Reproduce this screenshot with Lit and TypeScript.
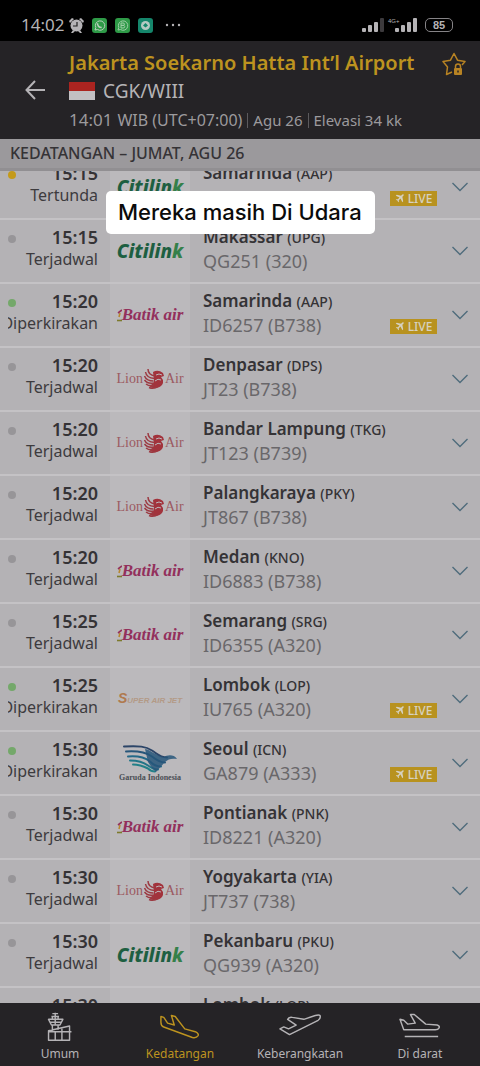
import { LitElement, html, css, svg, nothing } from "lit";
import { customElement, property, query } from "lit/decorators.js";
import { classMap } from "lit/directives/class-map.js";

type Airline = "citilink" | "batik" | "lion" | "super" | "garuda";
type Status = "Tertunda" | "Terjadwal" | "Diperkirakan";

interface Flight {
  time: string;
  status: Status;
  airline: Airline;
  city: string;
  code: string;
  flight: string;
  live?: boolean;
}

const FLIGHTS: Flight[] = [
  { time: "15:15", status: "Tertunda", airline: "citilink", city: "Samarinda", code: "AAP", flight: "QG425 (A320)", live: true },
  { time: "15:15", status: "Terjadwal", airline: "citilink", city: "Makassar", code: "UPG", flight: "QG251 (320)" },
  { time: "15:20", status: "Diperkirakan", airline: "batik", city: "Samarinda", code: "AAP", flight: "ID6257 (B738)", live: true },
  { time: "15:20", status: "Terjadwal", airline: "lion", city: "Denpasar", code: "DPS", flight: "JT23 (B738)" },
  { time: "15:20", status: "Terjadwal", airline: "lion", city: "Bandar Lampung", code: "TKG", flight: "JT123 (B739)" },
  { time: "15:20", status: "Terjadwal", airline: "lion", city: "Palangkaraya", code: "PKY", flight: "JT867 (B738)" },
  { time: "15:20", status: "Terjadwal", airline: "batik", city: "Medan", code: "KNO", flight: "ID6883 (B738)" },
  { time: "15:25", status: "Terjadwal", airline: "batik", city: "Semarang", code: "SRG", flight: "ID6355 (A320)" },
  { time: "15:25", status: "Diperkirakan", airline: "super", city: "Lombok", code: "LOP", flight: "IU765 (A320)", live: true },
  { time: "15:30", status: "Diperkirakan", airline: "garuda", city: "Seoul", code: "ICN", flight: "GA879 (A333)", live: true },
  { time: "15:30", status: "Terjadwal", airline: "batik", city: "Pontianak", code: "PNK", flight: "ID8221 (A320)" },
  { time: "15:30", status: "Terjadwal", airline: "lion", city: "Yogyakarta", code: "YIA", flight: "JT737 (738)" },
  { time: "15:30", status: "Terjadwal", airline: "citilink", city: "Pekanbaru", code: "PKU", flight: "QG939 (A320)" },
  { time: "15:30", status: "Terjadwal", airline: "lion", city: "Lombok", code: "LOP", flight: "JT657 (B738)" },
];

@customElement("airline-logo")
class AirlineLogo extends LitElement {
  @property() airline: Airline = "citilink";

  static styles = css`
    :host { display: block; }
    .logo { display: flex; align-items: center; justify-content: center; white-space: nowrap; line-height: 20px; }
    .citilink { font: italic 800 19px/20px "Noto Sans", sans-serif; color: #1d5f41; }
    .citilink b { color: #35804a; font-weight: 800; }
    .batik { font: italic 700 17px/20px "Liberation Serif", serif; color: #93305c; gap: 4px; }
    .batik .name { display: flex; align-items: center; }
    .lion { font: 14px/20px "Liberation Serif", serif; color: #9c5a62; }
    .super { font: italic 700 8px/12px "Liberation Sans", sans-serif; color: #b39a86; align-items: baseline; }
    .super b { font-size: 14px; color: #b07a4e; }
    .garuda { flex-direction: column; font: 700 8px/9px "Liberation Serif", serif; color: #4a4e53; }
  `;

  render() {
    switch (this.airline) {
      case "citilink":
        return html`<div class="logo citilink"><span>Citilin<b>k</b></span></div>`;
      case "batik":
        return html`<div class="logo batik"><span class="name"><svg width="5" height="14" viewBox="0 0 5 14" fill="none" stroke-width="1.600"><path d="M5 2 1 5" stroke="#93305c" /><path d="M3 5 2 9" stroke="#b8862e" /><path d="M0 12.500h5" stroke="#7d7a2c" /></svg>Batik</span><span>air</span></div>`;
      case "lion":
        return html`<div class="logo lion"><span>Lion</span>
          <svg width="22" height="22" viewBox="0 0 22 22" fill="none" stroke="#9c3a42" stroke-width="1.500">
            <path d="M10 4q5-3 10 1l1 3-3 1 2 3q1 6-6 8-6 1-8-3 5 0 5-5z" fill="#a2333c" stroke="none" />
            <path d="M5 1q0 6 7 7M2.500 4q1 6 9 6.500M1.500 8q2 5 9 5M1.500 12q3 4 9 3M3 16q4 3 8 1M6 19.500q5 2 8-1" />
            <path d="M13 7q3-2 6 0M12 13q3-3 6-1" stroke="#bbb9bc" stroke-width="1" />
          </svg><span>Air</span></div>`;
      case "super":
        return html`<div class="logo super"><b>S</b><span>UPER AIR JET</span></div>`;
      case "garuda":
        return html`<div class="logo garuda">
          <svg width="54" height="28" viewBox="0 0 54 28">
            <g fill="none" stroke-linecap="round" stroke-width="2">
              <path d="M1 1.500c15-1 22 0 28 4 6 4 8 7 15 7" stroke="#2c4568" />
              <path d="M3 6.500c13-1 20 1 26 5 5 4 8 6 13 6" stroke="#27567a" />
              <path d="M5 11.500c11-1 17 1 22 5 4 4 7 5 11 5" stroke="#236988" />
              <path d="M7 15.500c10 0 14 2 18 5 4 3 6 4 10 4" stroke="#217588" />
              <path d="M10 19.500c7 0 11 2 15 4 2 2 4 3 7 3" stroke="#238088" />
            </g>
            <path fill="#27567a" d="M22 4c6 1 11 7 19 8 3-2 10-3 13 2-5-1-9 0-12 3l-9 10-4-4-4-6z" opacity=".85" />
          </svg><span>Garuda Indonesia</span></div>`;
    }
  }
}

@customElement("flight-row")
class FlightRow extends LitElement {
  @property({ attribute: false }) flight!: Flight;

  static styles = css`
    :host { display: block; }
    .row {
      display: grid; grid-template-columns: 110px 80px 1fr auto 43px;
      height: 64px; box-sizing: border-box; border-bottom: 2px solid #c4c2c5; background: #b4b2b5;
    }
    .when { display: grid; grid-template-columns: 8px 1fr; padding: 6px 12px 0 8px; align-content: start; }
    .dot { width: 8px; height: 8px; border-radius: 50%; background: #979598; margin-top: 9px; }
    .dot.ontime { background: #74a86a; }
    .dot.late { background: #c49a1a; }
    .time { text-align: right; font: 600 18px/22px "Noto Sans", sans-serif; color: #353336; }
    .status {
      grid-column: 1 / -1; display: flex; justify-content: flex-end; overflow: hidden;
      font-size: 16px; line-height: 22px; color: #3d3b3e;
    }
    .logo { background: #bbb9bc; display: grid; align-content: center; }
    .where { padding: 6px 0 0 13px; white-space: nowrap; }
    .city { font-weight: 600; font-size: 17px; line-height: 22px; color: #353336; }
    .code { font-size: 14px; font-weight: 500; }
    .number { font-size: 18px; line-height: 24px; color: #69676a; }
    .live {
      align-self: end; margin-bottom: 12px; display: flex; align-items: center; justify-content: center; gap: 4px;
      width: 47px; height: 15px; background: #b8921f; color: #d6d1c0;
      font: 500 12px/15px "Noto Sans", sans-serif;
    }
    .more { border: 0; background: none; padding: 0 0 0 3px; display: grid; place-content: center; }
  `;

  render() {
    const f = this.flight;
    return html`<div class="row">
      <div class="when">
        <span class=${classMap({ dot: true, ontime: f.status === "Diperkirakan", late: f.status === "Tertunda" })}></span>
        <span class="time">${f.time}</span>
        <span class="status"><span>${f.status}</span></span>
      </div>
      <div class="logo"><airline-logo .airline=${f.airline}></airline-logo></div>
      <div class="where">
        <div class="city">${f.city} <span class="code">(${f.code})</span></div>
        <div class="number">${f.flight}</div>
      </div>
      ${f.live
        ? html`<span class="live"><svg width="9" height="9" viewBox="0 0 11 11" fill="#d6d1c0">
            <path d="M10.500.5C9.600 0 8.500 1 7.500 2L2 1 1 2l4.500 2.300L3.500 6.500 1.500 6.300 1 7l2 1 1 2 .8-.6L4.600 7.500l2.100-2L9 10l1-1L9 3.500c1-1 2-2 1.500-3z" />
          </svg>LIVE</span>`
        : html`<span></span>`}
      <button class="more" aria-label="Detail ${f.flight}">
        <svg width="18" height="10" viewBox="0 0 18 10" fill="none" stroke="#4f6c7c" stroke-width="1.400"><path d="M1.500 1 9 8.500 16.500 1" /></svg>
      </button>
    </div>`;
  }
}

const NAV = [
  {
    label: "Umum",
    icon: svg`<path d="M17 5V1m-3 1h6M13 5h8M10 8h15l-3 6h-9zM17 5v9M14 5v3M20 5v3M11 11h13M14 14v7M20 14v5M10 20l22-5v15H10zM10 21h24M17 21v9M24 18v12" />`,
  },
  {
    label: "Kedatangan",
    current: true,
    icon: svg`<path d="M2 5l3 1 4 6 7 2-3-10 4 1 10 13 11 3q4 2 3 4-2 3-6 2L5 16Q2 15 2 11z" />`,
  },
  {
    label: "Keberangkatan",
    icon: svg`<path d="M1 18l4-2 5 2 8-4-9-6q2-3 5-2l12 2 12-4q4-1 5 0 1 3-2 5L11 24z" />`,
  },
  {
    label: "Di darat",
    icon: svg`<path d="M1 8l4 1 4 4 8-1-5-9 4 0 12 10 12 1q3 1 2 3-1 2-4 2H5zM6 26h35" />`,
  },
];

@customElement("app-root")
class AppRoot extends LitElement {
  @query(".list") list!: HTMLElement;

  static styles = css`
    :host {
      display: flex; flex-direction: column; height: 100vh; position: relative; overflow: hidden;
      background: #b4b2b5; font-family: "Noto Sans", sans-serif;
    }
    .system {
      display: flex; align-items: center; gap: 8px; height: 41px; padding: 9px 27px 0 21px; box-sizing: border-box;
      background: #000; color: #b5b3b6; flex: none;
    }
    .clock { font-size: 17px; line-height: 20px; }
    .tray { display: flex; align-items: center; gap: 8px; flex: 1; margin-left: -3px; }
    .more { margin-left: 2px; }
    .cell { display: flex; align-items: flex-end; }
    .battery {
      width: 28px; height: 14px; box-sizing: border-box; border: 1px solid #858386; border-radius: 5px;
      font: 700 11px/12px "Liberation Sans", sans-serif; text-align: center; margin-left: -3px;
    }
    .airport {
      display: grid; grid-template-columns: 69px 1fr 52px; height: 98px; padding-top: 10px; box-sizing: border-box;
      background: #252326; flex: none; color: #b5b3b6;
    }
    .icon { border: 0; padding: 0; background: none; display: grid; place-content: center; }
    .back { height: 78px; }
    .star { height: 26px; }
    h1 { margin: 0; font-size: 20px; line-height: 24px; font-weight: 600; color: #bd931f; white-space: nowrap; }
    .codes { display: flex; align-items: center; gap: 8px; font-size: 19px; line-height: 32px; }
    .flag { width: 26px; height: 18px; background: linear-gradient(#ab2420 50%, #c2c0c3 50%); }
    .facts { display: flex; align-items: center; font-size: 15px; line-height: 26px; color: #9c9a9d; white-space: nowrap; }
    .now { font-size: 17px; margin-right: 5px; }
    .zone { font-size: 16px; }
    .fact { border-left: 1px solid #5c5a5d; line-height: 15px; margin-left: 5px; padding-left: 5px; }
    h2 {
      margin: 0; padding: 0 10px; font-size: 16px; line-height: 29px; font-weight: 500; flex: none;
      background: #9b999c; color: #353336; border-bottom: 3px solid #918f92;
    }
    .list { flex: 1; min-height: 0; margin: 0; padding: 0; list-style: none; overflow-y: auto; scrollbar-width: none; }
    .caption {
      position: absolute; top: 191px; left: 106px; padding: 0 13px 0 12px; border-radius: 5px; background: #fff; color: #0b0b0b;
      font: 500 22px/43px "Inter", sans-serif; white-space: nowrap;
    }
    nav { display: grid; grid-template-columns: repeat(4, 1fr); height: 63px; background: #252326; flex: none; }
    .tab {
      display: flex; flex-direction: column; align-items: center; padding-top: 8px;
      color: #b5b3b6; text-decoration: none; font-size: 12px; line-height: 18px;
    }
    .tab svg { margin-bottom: 4px; overflow: visible; }
    .tab.current { color: #bd931f; }
  `;

  firstUpdated() {
    requestAnimationFrame(() => (this.list.scrollTop = 15));
  }

  render() {
    return html`
      <div class="system">
        <span class="clock">14:02</span>
        <span class="tray">
          <svg width="15" height="15" viewBox="0 0 15 15" fill="#b5b3b6"><circle cx="7.500" cy="7.500" r="6" /><path d="M0 3 3 0l2 1-4 4zM15 3l-3-3-2 1 4 4zM2 15l2-3 2 1-2 2zM13 15l-2-3-2 1 2 2z" /><path d="M8 4v4H4" fill="none" stroke="#222" stroke-width="1.200" /></svg>
          <svg width="15" height="15" viewBox="0 0 15 15" fill="none" stroke="#b9cdbc"><rect width="15" height="15" rx="3" fill="#2e9a47" stroke="none" /><path d="M3 12l.8-2.500A4.700 4.700 0 1 1 5.500 11.500z" /><path d="M5.500 5.200c0 2.500 1.800 4.200 4.200 4.300" stroke-width="1.500" /></svg>
          <svg width="15" height="15" viewBox="0 0 15 15" fill="none" stroke="#9fcfa8"><rect width="15" height="15" rx="3" fill="#2e9a47" stroke="none" /><path d="M3 12l.8-2.500A4.700 4.700 0 1 1 5.500 11.500z" /><path d="M6 10V5h2q1.500 0 1.500 1.200T8 7.400H6h2q1.800 0 1.800 1.300T8 10z" /></svg>
          <svg width="15" height="15" viewBox="0 0 15 15"><rect width="15" height="15" rx="3" fill="#15866b" /><circle cx="7.500" cy="7.500" r="4.500" fill="#b5c9c3" /><path d="M7.500 5 10 7.500l-2.500 2L5 7.500z" fill="#15866b" /></svg>
          <svg class="more" width="20" height="4" viewBox="0 0 20 4" fill="#b5b3b6"><circle cx="4" cy="2" r="1.200" /><circle cx="10" cy="2" r="1.200" /><circle cx="16" cy="2" r="1.200" /></svg>
        </span>
        <span class="cell">
          <svg width="58" height="16" viewBox="0 0 58 16" fill="#b5b3b6">
            <rect y="11" width="4" height="4" rx="1" /><rect x="6" y="8" width="4" height="7" rx="1" /><rect x="12" y="5" width="4" height="10" rx="1" /><rect x="18" y="1" width="4" height="14" rx="1" fill="#3c3a3d" />
            <text x="26" y="6" font-size="6" font-family="Liberation Sans, sans-serif">4G+</text>
            <rect x="33" y="11" width="4" height="4" rx="1" /><rect x="39" y="8" width="4" height="7" rx="1" /><rect x="45" y="5" width="4" height="10" rx="1" /><rect x="51" y="1" width="4" height="14" rx="1" />
          </svg>
        </span>
        <span class="battery">85</span>
      </div>

      <header class="airport">
        <button class="icon back" aria-label="Kembali">
          <svg width="20" height="20" viewBox="0 0 20 20" fill="none" stroke="#b5b3b6" stroke-width="2"><path d="M10 1 1.500 10l8.500 9M2 10h18" /></svg>
        </button>
        <div>
          <h1>Jakarta Soekarno Hatta Int’l Airport</h1>
          <div class="codes"><span class="flag"></span>CGK/WIII</div>
          <div class="facts"><span class="now">14:01</span><span class="zone">WIB (UTC+07:00)</span><span class="fact">Agu 26</span><span class="fact">Elevasi 34 kk</span></div>
        </div>
        <button class="icon star" aria-label="Favorit">
          <svg width="24" height="24" viewBox="0 0 24 24" fill="none" stroke="#b88323" stroke-width="1.500">
            <path d="M10 20l-5.500 2.500 1-7.500L1 9.500l7.500-1.300L12 1.500l3.500 6.700 7.500 1.300-3 3.500" stroke-linejoin="round" />
            <rect x="12" y="16" width="8" height="7" rx="1" fill="#b88323" stroke="none" /><path d="M13.500 16v-1.500a2.500 2.500 0 0 1 5 0V16" /><path d="M16 18.500v2" stroke="#252326" />
          </svg>
        </button>
      </header>

      <h2>KEDATANGAN – JUMAT, AGU 26</h2>
      <ul class="list">
        ${FLIGHTS.map((f) => html`<li><flight-row .flight=${f}></flight-row></li>`)}
      </ul>

      <nav>
        ${NAV.map(
          (n) => html`<a href="#" class=${classMap({ tab: true, current: !!n.current })} aria-current=${n.current ? "page" : nothing}>
            <svg width="42" height="30" viewBox="0 0 44 30" fill="none" stroke="currentColor" stroke-width="1.500" stroke-linejoin="round">${n.icon}</svg>${n.label}</a>`,
        )}
      </nav>

      <div class="caption">Mereka masih Di Udara</div>
    `;
  }
}
